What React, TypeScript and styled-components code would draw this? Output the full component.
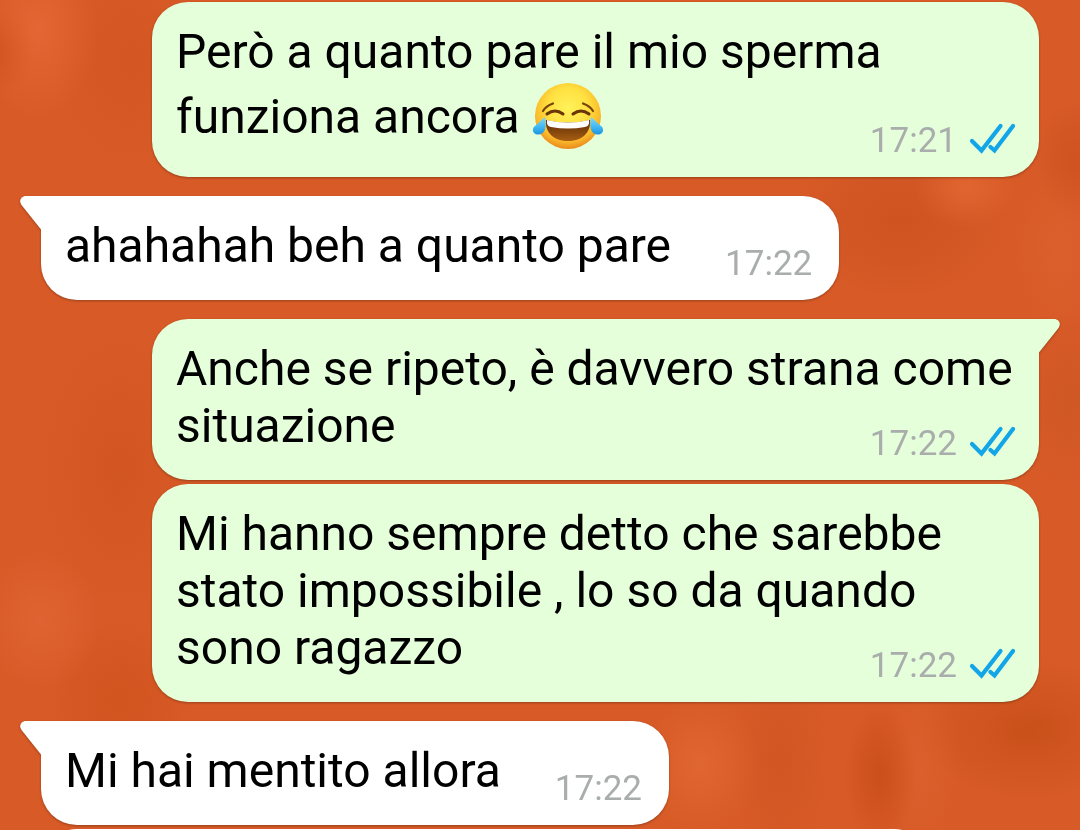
import React from 'react';
import styled, { createGlobalStyle, css } from 'styled-components';

const GlobalStyle = createGlobalStyle`
  *, *::before, *::after { box-sizing: border-box; }
  body {
    margin: 0;
    font-family: Roboto, "Liberation Sans", sans-serif;
    color: #000;
  }
`;

const Chat = styled.main`
  display: flex;
  flex-direction: column;
  height: 100vh;
  overflow: hidden;
  padding: 2px 41px 0;
  background:
    radial-gradient(ellipse 60px 90px at 38px 30px, rgba(236, 110, 60, 0.6), transparent),
    radial-gradient(ellipse 36px 40px at 0 50px, rgba(198, 72, 18, 0.6), transparent),
    radial-gradient(ellipse 80px 110px at 130px 60px, rgba(205, 80, 28, 0.4), transparent),
    radial-gradient(ellipse 50px 40px at 965px 188px, rgba(234, 110, 58, 0.6), transparent),
    radial-gradient(ellipse 110px 80px at 900px 220px, rgba(196, 76, 24, 0.5), transparent),
    radial-gradient(ellipse 40px 60px at 1075px 160px, rgba(196, 76, 24, 0.5), transparent),
    radial-gradient(ellipse 60px 90px at 1070px 400px, rgba(200, 86, 34, 0.5), transparent),
    radial-gradient(ellipse 50px 90px at 1060px 250px, rgba(226, 104, 52, 0.4), transparent),
    radial-gradient(ellipse 60px 70px at 40px 620px, rgba(232, 108, 62, 0.5), transparent),
    radial-gradient(ellipse 80px 140px at 120px 470px, rgba(202, 78, 26, 0.4), transparent),
    radial-gradient(ellipse 70px 80px at 120px 700px, rgba(204, 78, 22, 0.5), transparent),
    radial-gradient(ellipse 60px 70px at 700px 765px, rgba(230, 110, 54, 0.6), transparent),
    radial-gradient(ellipse 36px 70px at 880px 775px, rgba(198, 74, 20, 0.7), transparent),
    radial-gradient(ellipse 50px 110px at 780px 760px, rgba(204, 82, 30, 0.5), transparent),
    radial-gradient(ellipse 110px 70px at 1030px 730px, rgba(196, 76, 20, 0.7), transparent),
    radial-gradient(ellipse 40px 90px at 920px 770px, rgba(226, 104, 52, 0.4), transparent),
    #d75a27;
`;

type Side = 'in' | 'out';

const Bubble = styled.article<{ $side: Side; $tail?: boolean; $grouped?: boolean }>`
  position: relative;
  flex: none;
  min-height: 104px;
  padding: 21px 24px 26px;
  border-radius: 36px;
  filter: drop-shadow(0 1px 1px rgba(90, 40, 10, 0.5));
  margin-top: ${p => (p.$grouped ? '4px' : '19px')};

  &:first-child { margin-top: 0; }

  ${p => p.$side === 'out'
    ? css`
        align-self: flex-end;
        margin-left: 111px;
        background: #e5ffdb;
        border-top-right-radius: ${p.$tail ? 0 : 36}px;
      `
    : css`
        align-self: flex-start;
        padding-right: 27px;
        background: #fff;
        border-top-left-radius: ${p.$tail ? 0 : 36}px;
      `}
`;

const TailShape = styled.svg<{ $side: Side }>`
  position: absolute;
  top: 0;
  width: 22px;
  height: 34px;
  ${p => (p.$side === 'out'
    ? css`left: calc(100% - 1px);`
    : css`right: calc(100% - 1px); transform: scaleX(-1);`)}
`;

const Text = styled.div`
  display: flow-root;
  font-size: 48px;
  line-height: 57px;
`;

/* Floats beside the last line; a line with an emoji is 14px taller. */
const Meta = styled.span<{ $side: Side; $tall?: boolean }>`
  float: right;
  display: flex;
  align-items: center;
  gap: 12px;
  margin: ${p => (p.$tall ? '40px' : '26px')} 0 -11px ${p => (p.$side === 'in' ? '54px' : '24px')};
  font-size: 35px;
  line-height: 42px;
  color: #a9adac;
`;

const TickIcon = styled.svg`
  width: 46px;
  height: 32px;
  margin-bottom: 6px;
`;

const EmojiIcon = styled.svg`
  width: 72px;
  height: 71px;
  vertical-align: -18px;
`;

const Filler = styled.article`
  flex: none;
  width: 889px;
  height: 104px;
  margin-top: 4px;
  border-radius: 36px;
  background: #fff;
`;

function Tail({ side }: { side: Side }) {
  return (
    <TailShape $side={side} viewBox="0 0 22 34" aria-hidden="true">
      <path
        d="M0 0H16C21 0 23.500 5 20.500 9L1 33.500H0Z"
        fill={side === 'out' ? '#e5ffdb' : '#fff'}
      />
    </TailShape>
  );
}

function Ticks() {
  return (
    <TickIcon viewBox="0 0 46 32" role="img" aria-label="Letto">
      <g fill="none" stroke="#12a5e8" strokeWidth="4.200">
        <path d="M3 19L12.500 28.500L31.500 4" strokeLinecap="round" />
        <path d="M21.500 25L25.500 28.500L44 4" strokeLinecap="round" />
      </g>
    </TickIcon>
  );
}

function JoyEmoji() {
  return (
    <EmojiIcon viewBox="1 0 72 71" role="img" aria-label="Faccina che piange dal ridere">
      <defs>
        <radialGradient id="face" cx="50%" cy="38%" r="62%">
          <stop offset="0" stopColor="#fff25a" />
          <stop offset="0.5" stopColor="#ffe040" />
          <stop offset="0.8" stopColor="#fbbb2c" />
          <stop offset="1" stopColor="#ea8a1c" />
        </radialGradient>
        <linearGradient id="mouth" x1="0" y1="0" x2="0" y2="1">
          <stop offset="0" stopColor="#5a2a08" />
          <stop offset="1" stopColor="#a85e12" />
        </linearGradient>
        <linearGradient id="tear" x1="0" y1="0" x2="0" y2="1">
          <stop offset="0" stopColor="#84d8fa" />
          <stop offset="0.6" stopColor="#3eb6f2" />
          <stop offset="1" stopColor="#1c94e0" />
        </linearGradient>
      </defs>
      <circle cx="37" cy="36" r="33" fill="url(#face)" />
      <g fill="none" strokeLinecap="round">
        <path d="M12 31Q15 26 22 23.500" stroke="#7a430b" strokeWidth="2.200" />
        <path d="M52 23.500Q59 26 62 31" stroke="#7a430b" strokeWidth="2.200" />
        <path d="M16 34Q24 28 32 34" stroke="#6b3507" strokeWidth="3" />
        <path d="M42 34Q50 28 58 34" stroke="#6b3507" strokeWidth="3" />
      </g>
      <path d="M15 40Q37 45 59 40C60 54 50 61 37 61S14 54 15 40Z" fill="url(#mouth)" />
      <path d="M16 40Q37 45 58 40Q59 46 54 47Q37 50 20 47Q15 46 16 40Z" fill="#fff" />
      <path d="M14 37C15 43 16 54 8 54.500C2 55 0 49 4 46C8 43 10 40 14 37Z" fill="url(#tear)" />
      <path d="M60 37C59 43 58 54 66 54.500C72 55 74 49 70 46C66 43 64 40 60 37Z" fill="url(#tear)" />
    </EmojiIcon>
  );
}

interface MessageProps {
  side: Side;
  time: string;
  tail?: boolean;
  grouped?: boolean;
  tall?: boolean;
  children: React.ReactNode;
}

function Message({ side, time, tail, grouped, tall, children }: MessageProps) {
  return (
    <Bubble $side={side} $tail={tail} $grouped={grouped}>
      {tail && <Tail side={side} />}
      <Text>
        {children}
        <Meta $side={side} $tall={tall}>
          <time>{time}</time>
          {side === 'out' && <Ticks />}
        </Meta>
      </Text>
    </Bubble>
  );
}

export default function App() {
  return (
    <>
      <GlobalStyle />
      <Chat>
        <Message side="out" time="17:21" tall>
          Però a quanto pare il mio sperma funziona ancora <JoyEmoji />
        </Message>
        <Message side="in" time="17:22" tail>ahahahah beh a quanto pare</Message>
        <Message side="out" time="17:22" tail>
          Anche se ripeto, è davvero strana come situazione
        </Message>
        <Message side="out" time="17:22" grouped>
          Mi hanno sempre detto che sarebbe stato impossibile , lo so da quando sono ragazzo
        </Message>
        <Message side="in" time="17:22" tail>Mi hai mentito allora</Message>
        <Filler aria-hidden="true" />
      </Chat>
    </>
  );
}
